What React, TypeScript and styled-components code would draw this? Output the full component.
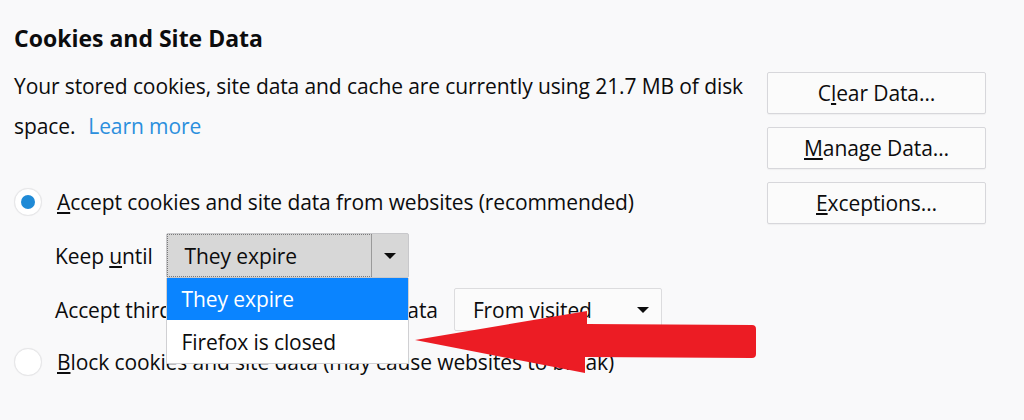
import React from "react";
import styled, { createGlobalStyle } from "styled-components";

const GlobalStyle = createGlobalStyle`
  html, body {
    margin: 0;
    padding: 0;
    background: #f9f9fa;
  }
  body {
    font-family: "Open Sans", "Noto Sans", "Liberation Sans", sans-serif;
    color: #0c0c0d;
  }
`;

const Page = styled.main`
  position: relative;
  width: 1024px;
  height: 420px;
  box-sizing: border-box;
  padding: 24px 38px 0 14px;
  overflow: hidden;
`;

const Title = styled.h2`
  margin: 0;
  font-size: 23px;
  font-weight: 700;
  line-height: 28px;
`;

const Content = styled.div`
  display: grid;
  grid-template-columns: 1fr 219px;
  column-gap: 20px;
  margin-top: 14px;
`;

const Left = styled.div`
  display: flex;
  flex-direction: column;
`;

const Description = styled.p`
  margin: 0;
  font-size: 21px;
  line-height: 40px;
  letter-spacing: -0.1px;
  white-space: nowrap;
`;

const Link = styled.a`
  color: #2b8fdd;
  text-decoration: none;
  margin-left: 13px;
`;

const Buttons = styled.div`
  display: flex;
  flex-direction: column;
  gap: 13px;
  padding-top: 6px;
`;

const Button = styled.button`
  height: 42px;
  border: 1px solid #d7d7db;
  border-radius: 2px;
  background: #fbfbfb;
  box-shadow: 0 1px 1px rgba(0, 0, 0, 0.04);
  font-family: inherit;
  font-size: 21px;
  letter-spacing: -0.1px;
  color: #0c0c0d;
  padding: 0;
`;

const Row = styled.div<{ $top: number; $indent?: number; $gap?: number }>`
  display: flex;
  align-items: center;
  gap: ${(p) => p.$gap ?? 13}px;
  margin-top: ${(p) => p.$top}px;
  padding-left: ${(p) => p.$indent ?? 0}px;
  font-size: 21px;
  letter-spacing: -0.1px;
  min-height: 40px;
  white-space: nowrap;
`;

const Radio = styled.span<{ $checked?: boolean }>`
  position: relative;
  width: 26px;
  height: 26px;
  border-radius: 50%;
  background: #fff;
  border: 1px solid #e6e6e8;
  box-shadow: 0 0 1px rgba(0, 0, 0, 0.08);
  margin-right: 2px;
  flex: none;
  &::after {
    content: "";
    display: ${(p) => (p.$checked ? "block" : "none")};
    position: absolute;
    left: 6px;
    top: 6px;
    width: 14px;
    height: 14px;
    border-radius: 50%;
    background: #1f8ad6;
  }
`;

const SelectWrap = styled.div`
  position: relative;
`;

const Select = styled.div<{ $open?: boolean; $width: number; $height: number }>`
  display: flex;
  align-items: stretch;
  box-sizing: border-box;
  width: ${(p) => p.$width}px;
  height: ${(p) => p.$height}px;
  border: 1px solid ${(p) => (p.$open ? "#c8c8cb" : "#dcdcde")};
  background: ${(p) => (p.$open ? "#d7d7d7" : "#fbfbfb")};
  border-radius: 2px;
`;

const SelectValue = styled.div<{ $focus?: boolean }>`
  flex: 1;
  display: flex;
  align-items: center;
  padding-left: 17px;
  border: 1px dotted ${(p) => (p.$focus ? "#7a7a7a" : "transparent")};
  border-right: 1px solid ${(p) => (p.$focus ? "#9a9a9a" : "transparent")};
`;

const SelectArrow = styled.div`
  width: 36px;
  display: flex;
  align-items: center;
  justify-content: center;
  &::after {
    content: "";
    border-left: 6px solid transparent;
    border-right: 6px solid transparent;
    border-top: 6px solid #0c0c0d;
  }
`;

const Popup = styled.ul`
  position: absolute;
  top: 100%;
  left: 0;
  right: 0;
  margin: 0;
  padding: 0;
  list-style: none;
  background: #fff;
  border: 1px solid #d0d0d3;
  border-top: none;
  z-index: 2;
`;

const Option = styled.li<{ $active?: boolean }>`
  height: ${(p) => (p.$active ? 42 : 43)}px;
  display: flex;
  align-items: center;
  padding-left: 15px;
  background: ${(p) => (p.$active ? "#0a84ff" : "#fff")};
  color: ${(p) => (p.$active ? "#fff" : "#0c0c0d")};
`;

const Annotation = styled.svg`
  position: absolute;
  left: 0;
  top: 0;
  pointer-events: none;
  z-index: 3;
`;

export default function App() {
  return (
    <>
      <GlobalStyle />
      <Page>
        <Title>Cookies and Site Data</Title>
        <Content>
          <Left>
            <Description>
              Your stored cookies, site data and cache are currently using 21.7 MB of disk
              <br />
              space.
              <Link href="#">Learn more</Link>
            </Description>

            <Row $top={36}>
              <Radio $checked />
              <span>
                <u>A</u>ccept cookies and site data from websites (recommended)
              </span>
            </Row>

            <Row $top={11} $indent={41}>
              <span>
                Keep <u>u</u>ntil
              </span>
              <SelectWrap>
                <Select $open $width={243} $height={45}>
                  <SelectValue $focus>They expire</SelectValue>
                  <SelectArrow />
                </Select>
                <Popup>
                  <Option $active>They expire</Option>
                  <Option>Firefox is closed</Option>
                </Popup>
              </SelectWrap>
            </Row>

            <Row $top={10} $indent={41} $gap={16}>
              <span>Accept third-party cookies and site data</span>
              <Select $width={208} $height={43}>
                <SelectValue>From visited</SelectValue>
                <SelectArrow />
              </Select>
            </Row>

            <Row $top={11}>
              <Radio />
              <span>
                <u>B</u>lock cookies and site data (may cause websites to break)
              </span>
            </Row>
          </Left>

          <Buttons>
            <Button>
              C<u>l</u>ear Data…
            </Button>
            <Button>
              <u>M</u>anage Data…
            </Button>
            <Button>
              <u>E</u>xceptions…
            </Button>
          </Buttons>
        </Content>

        <Annotation width="1024" height="420" viewBox="0 0 1024 420">
          <path
            d="M415 340 L587 311 L587 324 L752 325 Q756 325 756 329 L756 354 Q756 358 752 358 L585 357 L585 373 Z"
            fill="#ec1c24"
          />
        </Annotation>
      </Page>
    </>
  );
}
